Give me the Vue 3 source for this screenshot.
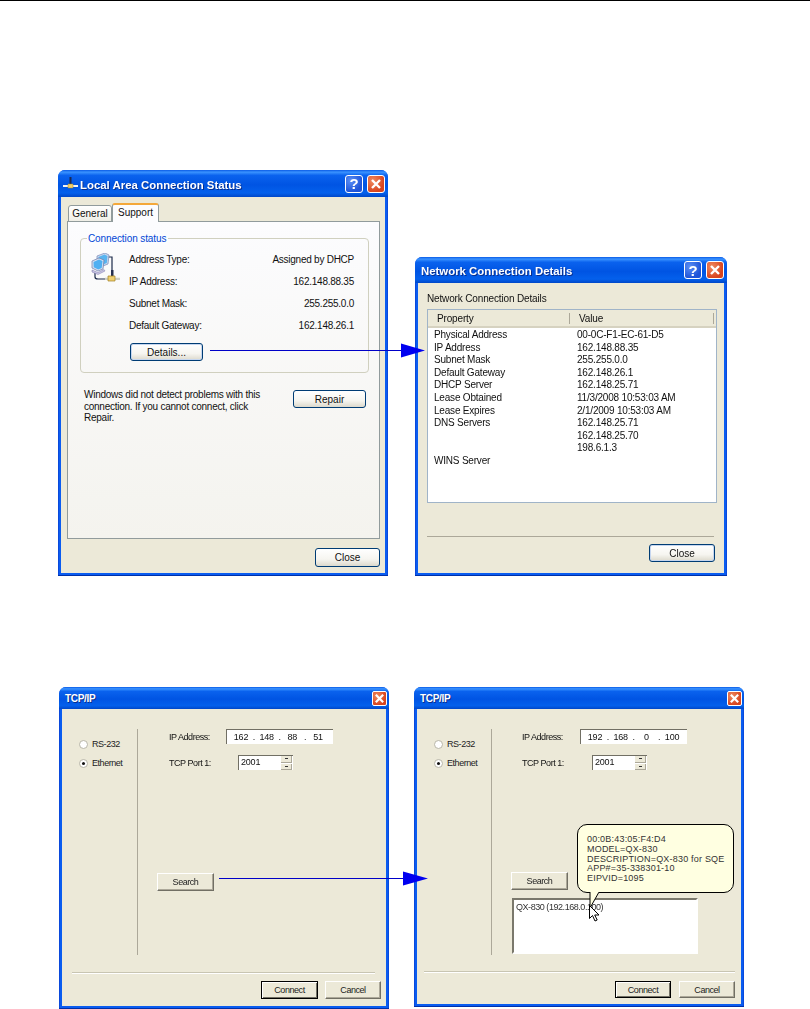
<script setup>
const statusRows = [
  ['Address Type:', 'Assigned by DHCP'],
  ['IP Address:', '162.148.88.35'],
  ['Subnet Mask:', '255.255.0.0'],
  ['Default Gateway:', '162.148.26.1'],
]
const detailRows = [
  ['Physical Address', '00-0C-F1-EC-61-D5'],
  ['IP Address', '162.148.88.35'],
  ['Subnet Mask', '255.255.0.0'],
  ['Default Gateway', '162.148.26.1'],
  ['DHCP Server', '162.148.25.71'],
  ['Lease Obtained', '11/3/2008 10:53:03 AM'],
  ['Lease Expires', '2/1/2009 10:53:03 AM'],
  ['DNS Servers', '162.148.25.71'],
  ['', '162.148.25.70'],
  ['', '198.6.1.3'],
  ['WINS Server', ''],
]
const tipLines = [
  '00:0B:43:05:F4:D4',
  'MODEL=QX-830',
  'DESCRIPTION=QX-830 for SQE',
  'APP#=35-338301-10',
  'EIPVID=1095',
]
const tcpWindows = [
  { key: 'a', cls: 'tcp-a', ip: ['162', '148', '88', '51'], found: false },
  { key: 'b', cls: 'tcp-b', ip: ['192', '168', '0', '100'], found: true },
]
</script>

<template>
  <div class="page">
    <svg class="arrows" width="810" height="1009" viewBox="0 0 810 1009">
      <line x1="210" y1="350.5" x2="404" y2="350.5" stroke="#0000c8" stroke-width="1" />
      <polygon points="401,343.5 425,350.5 401,357.5" fill="#0000f0" />
      <line x1="219" y1="878.5" x2="407" y2="878.5" stroke="#0000c8" stroke-width="1" />
      <polygon points="403,871.5 428,878.5 403,885.5" fill="#0000f0" />
    </svg>

    <div class="row row-top">
      <section class="win win-status">
        <header class="title">
          <svg class="title-icon" width="15" height="13" viewBox="0 0 15 13">
            <path d="M6.500 0h2v8h-2z" fill="#1b2a55" />
            <path d="M0 8h15v2H0z" fill="#f4f4f0" />
            <path d="M5 7h5v4H5z" fill="#f0d070" stroke="#a08020" stroke-width=".5" />
          </svg>
          <span class="title-text">Local Area Connection Status</span>
          <span class="cap cap-help">?</span>
          <span class="cap cap-close">
            <svg width="12" height="12" viewBox="0 0 12 12"><path d="M2 2l8 8M10 2l-8 8" stroke="#fff" stroke-width="2.400" /></svg>
          </span>
        </header>
        <div class="body status-body">
          <div class="tabs">
            <span class="tab">General</span>
            <span class="tab tab-on">Support</span>
          </div>
          <div class="panel">
            <div class="group">
              <span class="legend">Connection status</span>
              <svg class="net-icon" width="29" height="29" viewBox="0 0 29 29">
                <path d="M17 4h4v14" fill="none" stroke="#1c2a4a" stroke-width="1.200" />
                <path d="M4 20v4q0 2 3 2h11" fill="none" stroke="#1c2a4a" stroke-width="1.200" />
                <path d="M6 3l8-3 4 2-1 9-5 2-6-3z" fill="#cdd8ee" stroke="#7488b8" stroke-width=".7" />
                <path d="M7.500 4l6-2.500 3 1.500-.7 7-3.800 1.500-4.500-2.200z" fill="#58b4f0" />
                <path d="M1 8l7-3 5 2-1 9-5 2-6-3z" fill="#d8e0f0" stroke="#6878a8" stroke-width=".7" />
                <path d="M2.500 9l5.500-2.500 3.500 1.500-.8 7-3.500 1.500-4.500-2.200z" fill="#4fb0f2" />
                <path d="M1 17l6 2.500 6-3 1 1.500-7 3.500-6-2.500z" fill="#c8c4e4" stroke="#7a76a8" stroke-width=".5" />
                <path d="M20 17h2.500v7H20z" fill="#26304f" />
                <path d="M14 24h15v3H14z" fill="#cfcfc4" />
                <path d="M14 24h15v1H14z" fill="#f0f0e8" />
                <path d="M17 23h7v5h-7z" fill="#f0d070" stroke="#a08020" stroke-width=".7" />
              </svg>
              <div class="status-col">
                <div v-for="r in statusRows" :key="r[0]" class="status-row">
                  <span>{{ r[0] }}</span><span>{{ r[1] }}</span>
                </div>
                <button class="xp-btn btn-details">Details...</button>
              </div>
            </div>
            <div class="repair-row">
              <p class="repair-text">Windows did not detect problems with this connection. If you cannot connect, click Repair.</p>
              <button class="xp-btn btn-repair">Repair</button>
            </div>
          </div>
          <div class="status-foot">
            <button class="xp-btn btn-close">Close</button>
          </div>
        </div>
      </section>

      <section class="win win-details">
        <header class="title">
          <span class="title-text">Network Connection Details</span>
          <span class="cap cap-help">?</span>
          <span class="cap cap-close">
            <svg width="12" height="12" viewBox="0 0 12 12"><path d="M2 2l8 8M10 2l-8 8" stroke="#fff" stroke-width="2.400" /></svg>
          </span>
        </header>
        <div class="body details-body">
          <div class="details-label">Network Connection Details</div>
          <div class="listview">
            <div class="lv-head">
              <span class="lv-h1">Property</span>
              <span class="lv-h2">Value</span>
            </div>
            <div class="lv-rows">
              <div v-for="(r, i) in detailRows" :key="i" class="lv-row">
                <span>{{ r[0] }}</span><span>{{ r[1] }}</span>
              </div>
            </div>
          </div>
          <div class="details-sep"></div>
          <button class="xp-btn btn-close2">Close</button>
        </div>
      </section>
    </div>

    <div class="row row-bottom">
      <section v-for="w in tcpWindows" :key="w.key" class="win tcp" :class="w.cls">
        <header class="title title-tcp">
          <span class="title-text">TCP/IP</span>
          <span class="cap cap-close cap-small">
            <svg width="11" height="11" viewBox="0 0 12 12"><path d="M2 2l8 8M10 2l-8 8" stroke="#fff" stroke-width="2.400" /></svg>
          </span>
        </header>
        <div class="body tcp-body">
          <div class="tcp-main">
            <div class="tcp-left">
              <label class="radio-row"><i class="radio"></i>RS-232</label>
              <label class="radio-row"><i class="radio radio-on"></i>Ethernet</label>
            </div>
            <div class="tcp-right">
              <div class="ip-row">
                <span class="ip-label">IP Address:</span>
                <span class="ip-input">
                  <template v-for="(o, i) in w.ip" :key="i">
                    <span class="octet">{{ o }}</span><span v-if="i < 3" class="dot">.</span>
                  </template>
                </span>
              </div>
              <div class="port-row">
                <span class="port-label">TCP Port 1:</span>
                <span class="spin">
                  <span class="spin-val">2001</span>
                  <span class="spin-btns">
                    <i class="spin-up"></i>
                    <i class="spin-down"></i>
                  </span>
                </span>
              </div>
              <button class="cl-btn btn-search">Search</button>
              <div v-if="w.found" class="found-list">QX-830 (192.168.0.100)</div>
            </div>
          </div>
          <div class="tcp-sep"></div>
          <div class="tcp-foot">
            <button class="cl-btn btn-default">Connect</button>
            <button class="cl-btn btn-cancel">Cancel</button>
          </div>
          <template v-if="w.found">
            <div class="bubble">
              <div v-for="l in tipLines" :key="l">{{ l }}</div>
            </div>
            <svg class="tail" width="14" height="18" viewBox="0 0 14 18">
              <path d="M1 0L1 16L10 0" fill="#ffffe1" stroke="#000" stroke-width="1" />
              <path d="M2 0H9.200" stroke="#ffffe1" stroke-width="2" />
            </svg>
            <svg class="pointer" width="11" height="17" viewBox="0 0 11 17">
              <path d="M.5.5v13l3-3 2.500 5.500 2.200-1-2.500-5h4.300z" fill="#fff" stroke="#000" stroke-width="1" />
            </svg>
          </template>
        </div>
      </section>
    </div>
  </div>
</template>

<style>
html, body { margin: 0; background: #fff; }
</style>

<style scoped>
.page {
  position: relative;
  width: 810px;
  height: 1009px;
  overflow: hidden;
  background: #fff;
  border-top: 1px solid #000;
  box-sizing: border-box;
  font-family: "Liberation Sans", Arial, sans-serif;
  font-size: 10px;
  color: #111;
}
.arrows { position: absolute; left: 0; top: -1px; z-index: 5; }
.row { display: flex; }
.row-top { align-items: flex-end; padding: 169px 0 0 58px; gap: 27px; }
.row-bottom { align-items: flex-start; padding: 111px 0 0 59px; gap: 25px; }

.win {
  box-sizing: border-box;
  flex: none;
  display: flex;
  flex-direction: column;
  background: linear-gradient(90deg, #0a3fd0 0, #0a5cf0 1.500px, #0a5cf0 calc(100% - 1.500px), #0a3fd0 100%);
  border-radius: 7px 7px 0 0;
  border-bottom: 1px solid #0030a8;
  overflow: hidden;
  filter: blur(0.35px);
}
.win-status { width: 330px; height: 406px; }
.win-details { width: 312px; height: 319px; }
.tcp-a { width: 330px; height: 322px; }
.tcp-b { width: 330px; height: 320px; }

.title {
  flex: none;
  height: 27px;
  display: flex;
  align-items: center;
  padding: 0 3px 0 5px;
  box-sizing: border-box;
  background: linear-gradient(180deg, #0a5be6 0%, #3a93ff 8%, #0a62ee 20%, #0054e3 55%, #0460ec 85%, #0047c8 100%);
}
.win-details .title { height: 26px; padding-left: 6px; }
.title-tcp { height: 22px; padding: 0 2px 0 6px; }
.title-icon { margin-right: 2px; }
.title-text {
  flex: 1;
  color: #fff;
  font-weight: 700;
  font-size: 11.400px;
  padding-top: 2px;
  text-shadow: 1px 1px 0 #0a2f8c;
}
.title-tcp .title-text { font-size: 10px; letter-spacing: -.3px; padding-top: 0; }
.cap {
  box-sizing: border-box;
  width: 18px;
  height: 18px;
  border: 1px solid #fff;
  border-radius: 3px;
  display: flex;
  align-items: center;
  justify-content: center;
  color: #fff;
}
.cap-help {
  background: radial-gradient(circle at 30% 30%, #5a8ff5, #1f54d8 70%);
  font-weight: 700;
  font-size: 15px;
  margin-right: 4px;
}
.cap-close { background: radial-gradient(circle at 30% 30%, #ef8a60, #d8451f 70%); }
.cap-small { width: 15px; height: 15px; border-radius: 2px; }

.body {
  flex: 1;
  min-height: 0;
  margin: 0 3px 2px;
  background: #ece9d8;
  position: relative;
  box-sizing: border-box;
}

/* status window */
.status-body { padding: 6px 5px 0 6px; letter-spacing: -.25px; }
.tabs { display: flex; align-items: flex-end; height: 19px; margin-bottom: -1px; position: relative; z-index: 1; }
.tab {
  box-sizing: border-box;
  height: 17px;
  width: 44px;
  margin-left: 1px;
  border: 1px solid #919b9c;
  border-radius: 3px 3px 0 0;
  background: linear-gradient(180deg, #fff, #efeee6);
  text-align: center;
  line-height: 16px;
  letter-spacing: 0;
}
.tab-on {
  height: 19px;
  width: 47px;
  margin-left: 0;
  background: #fcfcfe;
  border-top: 2px solid #f4a83a;
  border-bottom: 0;
  line-height: 15px;
}
.panel {
  box-sizing: border-box;
  height: 318px;
  border: 1px solid #919b9c;
  background: linear-gradient(180deg, #fcfcfe 0%, #f4f3ee 100%);
  padding: 16px 10px 0 12px;
}
.group {
  position: relative;
  box-sizing: border-box;
  height: 135px;
  border: 1px solid #d0d0bf;
  border-radius: 4px;
  display: flex;
  padding: 10px 14px 0 10px;
}
.legend {
  position: absolute;
  left: 6px;
  top: -7px;
  padding: 0 2px 0 1px;
  background: #fcfcfe;
  color: #0046d5;
  font-size: 10px;
  letter-spacing: -.1px;
  line-height: 13px;
}
.net-icon { flex: none; margin: 4px 9px 0 0; }
.status-col { flex: 1; min-width: 0; }
.status-row { display: flex; justify-content: space-between; height: 22px; line-height: 22px; }
.xp-btn {
  box-sizing: border-box;
  display: block;
  padding: 0;
  font: inherit;
  letter-spacing: 0;
  color: #111;
  border: 1px solid #003c74;
  border-radius: 3px;
  background: linear-gradient(180deg, #fff 0%, #f6f5f0 60%, #dcd9cc 100%);
}
.btn-details { width: 73px; height: 18px; margin: 6px 0 0 1px; box-shadow: inset 0 0 0 1px #c6d6ef; }
.repair-row { display: flex; justify-content: space-between; padding: 16px 3px 0 4px; }
.repair-text { margin: 0; width: 186px; line-height: 11.700px; }
.btn-repair { flex: none; width: 73px; height: 18px; margin-top: 1px; }
.status-foot { display: flex; justify-content: flex-end; padding-top: 9px; }
.btn-close { width: 65px; height: 19px; }

/* details window */
.details-body { padding: 10px 0 0 9px; letter-spacing: -.15px; }
.details-label { height: 12px; line-height: 12px; }
.listview {
  box-sizing: border-box;
  width: 290px;
  height: 194px;
  margin-top: 4px;
  border: 1px solid #a0b4c8;
  background: #fff;
}
.lv-head {
  display: flex;
  height: 18px;
  line-height: 17px;
  background: #ece9d8;
  box-shadow: inset 0 -2px 0 #d6d2c0;
}
.lv-h1 { width: 142px; padding-left: 9px; box-sizing: border-box; border-right: 1px solid #aca899; margin: 3px 0 4px; line-height: 11px; }
.lv-h2 { padding-left: 9px; margin-top: 3px; line-height: 11px; flex: 1; border-right: 1px solid #aca899; margin-bottom: 4px; margin-right: 2px; }
.lv-rows { padding: 1px 0 0 6px; }
.lv-row { display: grid; grid-template-columns: 143px 1fr; height: 12.600px; line-height: 12.600px; letter-spacing: -.2px; }
.details-sep { width: 287px; height: 1px; margin-top: 33px; background: #aca899; }
.btn-close2 { width: 66px; height: 18px; margin: 7px 0 0 222px; box-shadow: inset 0 0 0 1px #c6d6ef; }

/* tcp windows */
.tcp-body { padding-top: 20px; font-size: 9px; letter-spacing: -.45px; }
.tcp-main { display: flex; height: 226px; }
.tcp-left {
  flex: none;
  width: 76px;
  box-sizing: border-box;
  border-right: 1px solid #aca899;
  padding: 9px 0 0 17px;
  display: flex;
  flex-direction: column;
  gap: 7px;
}
.tcp-b .tcp-left { width: 75px; }
.radio-row { display: flex; align-items: center; height: 12px; gap: 4px; color: #222; }
.radio {
  box-sizing: border-box;
  flex: none;
  width: 9px;
  height: 9px;
  border-radius: 50%;
  background: #fff;
  border: 1px solid #b8b6a8;
  position: relative;
}
.radio-on::after {
  content: "";
  position: absolute;
  left: 2px;
  top: 2px;
  width: 3px;
  height: 3px;
  border-radius: 50%;
  background: #111;
}
.tcp-right { flex: 1; padding-left: 31px; min-width: 0; position: relative; }
.tcp-b .tcp-right { padding-left: 30px; }
.ip-row { display: flex; align-items: center; height: 15px; }
.ip-label { width: 57px; }
.tcp-b .ip-label { width: 58px; }
.ip-input {
  box-sizing: border-box;
  width: 107px;
  height: 15px;
  background: #fff;
  border-left: 1px solid #716f64;
  border-top: 1px solid #716f64;
  display: flex;
  align-items: center;
  padding: 0 0 0 4px;
  letter-spacing: -.2px;
}
.octet { width: 20px; text-align: center; }
.dot { width: 5.700px; text-align: center; }
.port-row { display: flex; align-items: center; height: 15px; margin-top: 11px; }
.port-label { width: 69px; }
.tcp-b .port-label { width: 70px; }
.spin {
  box-sizing: border-box;
  width: 55px;
  height: 15px;
  background: #fff;
  border-left: 1px solid #716f64;
  border-top: 1px solid #716f64;
  display: flex;
  justify-content: space-between;
  line-height: 13px;
  padding-left: 2px;
  letter-spacing: -.2px;
}
.spin-btns { width: 11px; display: flex; flex-direction: column; gap: 1px; margin-right: 1px; }
.spin-up, .spin-down { flex: 1; background: #ece9d8; position: relative; box-shadow: inset -1px -1px 0 #aca899; }
.spin-up::after, .spin-down::after {
  content: "";
  position: absolute;
  left: 4px;
  top: 2px;
  width: 3px;
  height: 1px;
  background: #333;
}
.cl-btn {
  box-sizing: border-box;
  display: block;
  padding: 0;
  font: inherit;
  letter-spacing: inherit;
  color: #222;
  background: #ece9d8;
  border: 1px solid;
  border-color: #fff #716f64 #716f64 #fff;
  box-shadow: inset -1px -1px 0 #aca899;
}
.btn-search { width: 57px; height: 18px; margin: 103px 0 0 -12px; }
.tcp-b .btn-search { margin: 102px 0 0 -11px; }
.found-list {
  box-sizing: border-box;
  width: 186px;
  height: 56px;
  margin: 8px 0 0 -10px;
  background: #fff;
  border: 2px solid;
  border-color: #7a786c #fff #fff #7a786c;
  padding: 1px 0 0 2px;
  color: #333;
  line-height: 12px;
  letter-spacing: -.45px;
}
.tcp-sep { height: 1px; margin: 17px 11px 0 10px; background: #c8c5b2; box-shadow: 0 1px 0 #fff; }
.tcp-b .tcp-sep { margin: 16px 6px 0 7px; }
.tcp-foot { display: flex; justify-content: flex-end; gap: 7px; padding: 8px 5px 0 0; }
.tcp-b .tcp-foot { padding: 9px 6px 0 0; gap: 8px; }
.btn-default { width: 57px; height: 18px; border: 1px solid #000; box-shadow: inset 1px 1px 0 #fff, inset -1px -1px 0 #716f64; }
.btn-cancel { width: 56px; height: 18px; }
.tcp-b .btn-default { width: 56px; height: 17px; }
.tcp-b .btn-cancel { height: 17px; }

.bubble {
  position: absolute;
  left: 160px;
  top: 115px;
  box-sizing: border-box;
  width: 157px;
  height: 69px;
  border: 1px solid #000;
  border-radius: 10px;
  background: #ffffe1;
  padding: 10px 0 0 9px;
  line-height: 9.800px;
  font-size: 9px;
  letter-spacing: .2px;
  white-space: nowrap;
  color: #333;
  z-index: 2;
}
.tail { position: absolute; left: 172px; top: 183px; z-index: 3; }
.pointer { position: absolute; left: 172px; top: 196px; z-index: 4; }
</style>
